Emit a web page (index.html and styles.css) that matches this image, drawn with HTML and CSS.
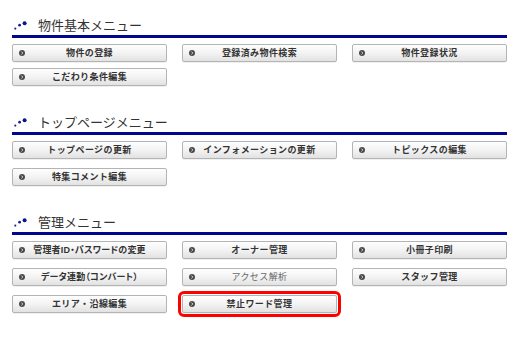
FILE: index.html
```html
<!DOCTYPE html>
<html lang="ja">
<head>
    <meta charset="UTF-8">
    <meta name="viewport" content="width=device-width, initial-scale=1.0">
    <title>管理画面メニュー</title>
    <link rel="stylesheet" href="styles.css">
</head>
<body>

    <!-- Icons -->
    <svg class="defs" width="0" height="0" aria-hidden="true">
        <symbol id="ico-dots" viewBox="0 0 13 9">
            <circle cx="1.3" cy="7.6" r="1.1" fill="#1a2a9c"/>
            <circle cx="5.6" cy="4.2" r="1.4" fill="#10208f"/>
            <circle cx="10.6" cy="2.2" r="2" fill="#0a168a"/>
        </symbol>
        <symbol id="ico-arrow" viewBox="0 0 6 6">
            <circle cx="3" cy="3" r="3" fill="#4a4a4a"/>
            <path d="M2.4 1.6 L3.8 3 L2.4 4.4" fill="none" stroke="#ddd" stroke-width="1"/>
        </symbol>
    </svg>

    <div class="page">

        <section class="menu">
            <h2 class="menu-title"><svg class="menu-mark"><use href="#ico-dots"/></svg>物件基本メニュー</h2>
            <div class="menu-grid menu-grid--tight">
                <a class="menu-btn" href="#"><svg class="btn-icon"><use href="#ico-arrow"/></svg><span class="btn-label">物件の登録</span></a>
                <a class="menu-btn" href="#"><svg class="btn-icon"><use href="#ico-arrow"/></svg><span class="btn-label">登録済み物件検索</span></a>
                <a class="menu-btn" href="#"><svg class="btn-icon"><use href="#ico-arrow"/></svg><span class="btn-label">物件登録状況</span></a>
                <a class="menu-btn" href="#"><svg class="btn-icon"><use href="#ico-arrow"/></svg><span class="btn-label">こだわり条件編集</span></a>
            </div>
        </section>

        <section class="menu">
            <h2 class="menu-title"><svg class="menu-mark"><use href="#ico-dots"/></svg>トップページメニュー</h2>
            <div class="menu-grid">
                <a class="menu-btn" href="#"><svg class="btn-icon"><use href="#ico-arrow"/></svg><span class="btn-label">トップページの更新</span></a>
                <a class="menu-btn" href="#"><svg class="btn-icon"><use href="#ico-arrow"/></svg><span class="btn-label">インフォメーションの更新</span></a>
                <a class="menu-btn" href="#"><svg class="btn-icon"><use href="#ico-arrow"/></svg><span class="btn-label">トピックスの編集</span></a>
                <a class="menu-btn" href="#"><svg class="btn-icon"><use href="#ico-arrow"/></svg><span class="btn-label">特集コメント編集</span></a>
            </div>
        </section>

        <section class="menu">
            <h2 class="menu-title"><svg class="menu-mark"><use href="#ico-dots"/></svg>管理メニュー</h2>
            <div class="menu-grid">
                <a class="menu-btn" href="#"><svg class="btn-icon"><use href="#ico-arrow"/></svg><span class="btn-label btn-label--palt">管理者ID・パスワードの変更</span></a>
                <a class="menu-btn" href="#"><svg class="btn-icon"><use href="#ico-arrow"/></svg><span class="btn-label">オーナー管理</span></a>
                <a class="menu-btn" href="#"><svg class="btn-icon"><use href="#ico-arrow"/></svg><span class="btn-label">小冊子印刷</span></a>
                <a class="menu-btn" href="#"><svg class="btn-icon"><use href="#ico-arrow"/></svg><span class="btn-label btn-label--palt">データ連動（コンバート）</span></a>
                <a class="menu-btn menu-btn--light" href="#"><svg class="btn-icon"><use href="#ico-arrow"/></svg><span class="btn-label">アクセス解析</span></a>
                <a class="menu-btn" href="#"><svg class="btn-icon"><use href="#ico-arrow"/></svg><span class="btn-label">スタッフ管理</span></a>
                <a class="menu-btn" href="#"><svg class="btn-icon"><use href="#ico-arrow"/></svg><span class="btn-label">エリア・沿線編集</span></a>
                <a class="menu-btn is-marked" href="#"><svg class="btn-icon"><use href="#ico-arrow"/></svg><span class="btn-label">禁止ワード管理</span></a>
            </div>
        </section>

    </div>

</body>
</html>
```

FILE: styles.css
```css
/* General Styling */
body {
    margin: 0;
    background: #fff;
    color: #333;
    font-family: "Liberation Sans", "Noto Sans CJK JP", sans-serif;
}

.defs {
    position: absolute;
}

.page {
    width: 495px;
    padding: 18px 12px 30px;
}

/* Sections */
.menu + .menu {
    margin-top: 29px;
}

.menu-title {
    display: flex;
    align-items: flex-start;
    gap: 11px;
    margin: 0;
    padding: 0 0 1px 2px;
    font-size: 13px;
    font-weight: normal;
    line-height: 16px;
    color: #333;
    border-bottom: 3px solid #00078c;
}

.menu-mark {
    width: 13px;
    height: 9px;
    margin-top: 3px;
    flex-shrink: 0;
}

/* Button Grid */
.menu-grid {
    display: grid;
    grid-template-columns: repeat(3, 155px);
    column-gap: 15px;
    row-gap: 9px;
    margin-top: 6px;
}

.menu-grid--tight {
    row-gap: 6px;
}

/* Buttons */
.menu-btn {
    display: flex;
    align-items: center;
    box-sizing: border-box;
    height: 18px;
    padding: 0 12px 0 6px;
    border: 1px solid #b4b4b4;
    border-radius: 2px;
    background: linear-gradient(180deg, #fefefe 0%, #f3f3f3 50%, #e2e2e2 100%);
    box-shadow: 0 1px 0 rgba(0, 0, 0, 0.06);
    color: #333;
    text-decoration: none;
}

.btn-icon {
    width: 6px;
    height: 6px;
    flex-shrink: 0;
}

.btn-label {
    flex: 1;
    text-align: center;
    font-size: 9px;
    font-weight: bold;
    letter-spacing: 0.4px;
    line-height: 1;
    white-space: nowrap;
}

/* long labels: proportional kana */
.btn-label--palt {
    font-feature-settings: "palt";
    letter-spacing: 0.2px;
}

.menu-btn--light .btn-label {
    font-weight: normal;
    color: #666;
}

/* Highlight frame */
.is-marked {
    outline: 3px solid #f00;
    outline-offset: 1px;
    border-radius: 2px;
}
```
